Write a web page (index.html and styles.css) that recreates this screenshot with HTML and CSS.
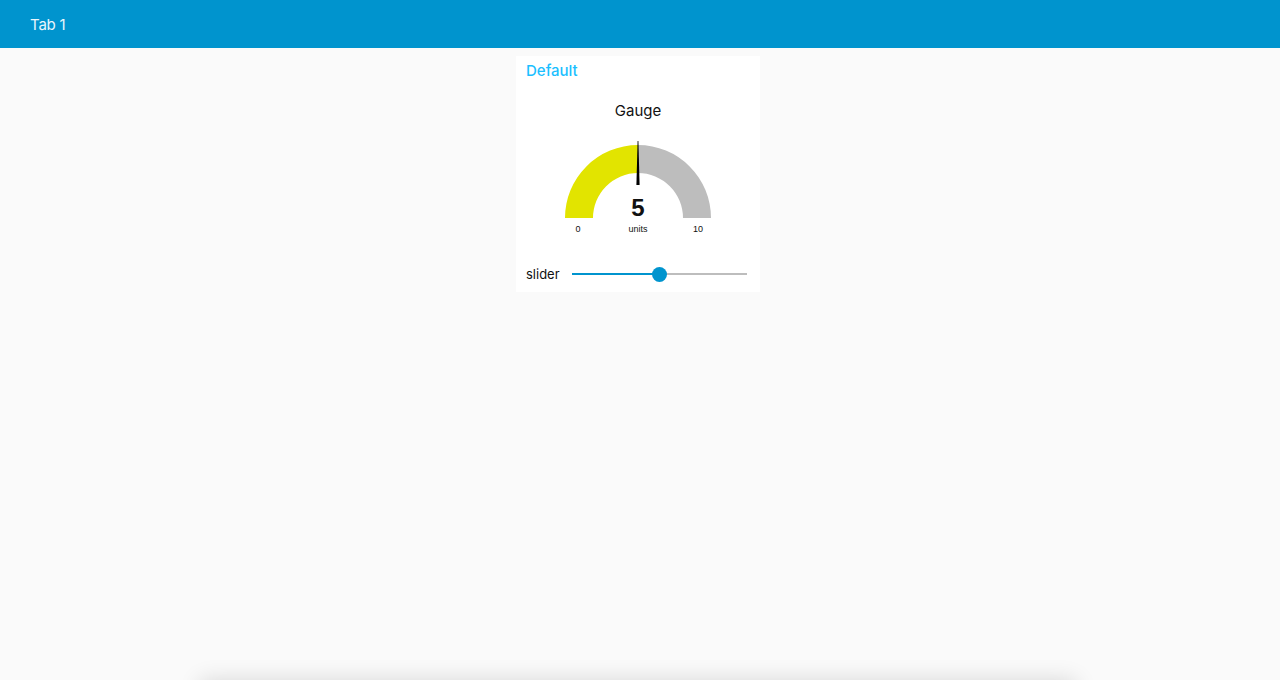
FILE: index.html
```html
<!DOCTYPE html>
<html>
<head>
<meta charset="utf-8">
<link rel="stylesheet" href="styles.css">
</head>
<body>
<header class="toolbar"><span class="tab-title">Tab 1</span></header>
<main class="content">
  <section class="card">
    <div class="card-title">Default</div>
    <div class="gauge">
      <div class="gauge-title">Gauge</div>
      <svg class="gauge-svg" width="244" height="124" viewBox="0 0 244 124">
        <path d="M 49 98 A 73 73 0 0 1 122 25 L 122 53 A 45 45 0 0 0 77 98 Z" fill="#e2e400"/>
        <path d="M 122 25 A 73 73 0 0 1 195 98 L 167 98 A 45 45 0 0 0 122 53 Z" fill="#bdbdbd"/>
        <polygon points="121.6,21 122.4,21 123.6,65 120.4,65" fill="#000"/>
        <text class="g-value" x="122" y="96" text-anchor="middle">5</text>
        <text class="g-small" x="122" y="112" text-anchor="middle">units</text>
        <text class="g-small" x="62" y="112" text-anchor="middle">0</text>
        <text class="g-small" x="182" y="112" text-anchor="middle">10</text>
      </svg>
    </div>
    <div class="slider-row">
      <span class="slider-label">slider</span>
      <div class="slider">
        <div class="track-on"></div>
        <div class="thumb"></div>
        <div class="track-off"></div>
      </div>
    </div>
  </section>
</main>
<div class="toast"></div>
</body>
</html>
```
FILE: styles.css
```css
html, body {
  margin: 0;
  padding: 0;
  height: 100%;
  overflow: hidden;
}
body {
  background: #fafafa;
  font-family: Inter, "Noto Sans", sans-serif;
}
.toolbar {
  height: 48px;
  background: #0094ce;
  display: flex;
  align-items: center;
  padding-left: 30px;
}
.tab-title {
  color: #eaf6fc;
  font-size: 15px;
  letter-spacing: -0.2px;
  margin-top: 1px;
}
.content {
  display: flex;
  justify-content: center;
  padding-top: 8px;
  padding-right: 4px;
}
.card {
  width: 244px;
  background: #fff;
  display: flex;
  flex-direction: column;
}
.card-title {
  height: 30px;
  padding: 6px 10px 0;
  box-sizing: border-box;
  color: #1bbfff;
  font-size: 15px;
  font-weight: 500;
  line-height: 18px;
}
.gauge {
  display: flex;
  flex-direction: column;
  align-items: center;
}
.gauge-title {
  margin-top: 16px;
  height: 18px;
  line-height: 18px;
  font-size: 15px;
  color: #111;
}
.gauge-svg {
  display: block;
}
.g-value {
  font-family: "Liberation Sans", Arial, sans-serif;
  font-weight: bold;
  font-size: 24px;
  fill: #111;
}
.g-small {
  font-family: "Liberation Sans", Arial, sans-serif;
  font-size: 9px;
  fill: #111;
}
.slider-row {
  margin-top: 12px;
  height: 36px;
  display: flex;
  align-items: center;
  padding: 0 13px 0 10px;
}
.slider-label {
  font-size: 13px;
  color: #111;
  width: 46px;
}
.slider {
  flex: 1;
  display: flex;
  align-items: center;
  height: 16px;
}
.track-on {
  flex: 1;
  height: 2px;
  background: #0094ce;
}
.track-off {
  flex: 1;
  height: 2px;
  background: #bdbdbd;
}
.thumb {
  width: 15px;
  height: 15px;
  border-radius: 50%;
  background: #0094ce;
  margin: 0 -7.5px;
  position: relative;
  z-index: 1;
}
.toast {
  position: fixed;
  left: 200px;
  width: 876px;
  top: 680px;
  height: 60px;
  background: #fff;
  box-shadow: 0 0 22px rgba(0, 0, 0, 0.14);
}
```
